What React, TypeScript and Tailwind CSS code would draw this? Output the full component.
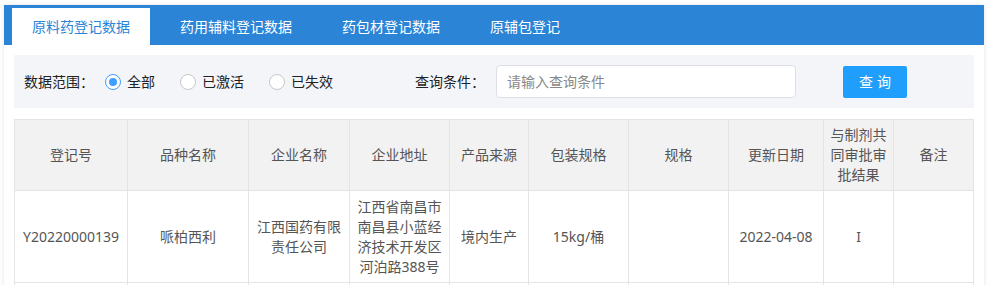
import React from 'react';

const font = '"Noto Sans", "Noto Sans CJK SC", sans-serif';

const tabs = ['原料药登记数据', '药用辅料登记数据', '药包材登记数据', '原辅包登记'];

const columns: { label: string; w: number }[] = [
  { label: '登记号', w: 113 },
  { label: '品种名称', w: 121 },
  { label: '企业名称', w: 101 },
  { label: '企业地址', w: 100 },
  { label: '产品来源', w: 79 },
  { label: '包装规格', w: 100 },
  { label: '规格', w: 100 },
  { label: '更新日期', w: 95 },
  { label: '与制剂共同审批审批结果', w: 70 },
  { label: '备注', w: 80 },
];

const row = [
  'Y20220000139',
  '哌柏西利',
  '江西国药有限责任公司',
  '江西省南昌市南昌县小蓝经济技术开发区河泊路388号',
  '境内生产',
  '15kg/桶',
  '',
  '2022-04-08',
  'I',
  '',
];

const Radio: React.FC<{ checked?: boolean; label: string }> = ({ checked, label }) => (
  <label className="flex items-center gap-[6px] cursor-pointer">
    <span
      className={
        checked
          ? 'w-4 h-4 rounded-full border border-[#409eff] bg-white flex items-center justify-center'
          : 'w-4 h-4 rounded-full border border-[#c8c8c8] bg-white'
      }
    >
      {checked && <span className="w-2 h-2 rounded-full bg-[#409eff]" />}
    </span>
    <span className="text-[14px] text-[#222]">{label}</span>
  </label>
);

export default function App() {
  return (
    <div className="bg-white w-[995px] h-[285px] overflow-hidden pt-[5px] px-1" style={{ fontFamily: font }}>
      <div className="w-[980px] bg-white shadow-[0_0_4px_rgba(0,0,0,0.12)]">
        <div className="h-10 bg-[#2b84d6] flex items-end pl-2 gap-[10px]">
          {tabs.map((t, i) => (
            <div
              key={t}
              className={
                i === 0
                  ? 'h-[37px] px-5 flex items-center bg-white text-[#2b84d6] text-[14px]'
                  : 'h-[37px] px-5 flex items-center text-white text-[14px]'
              }
            >
              {t}
            </div>
          ))}
        </div>

        <div className="px-[10px] pt-[10px]">
          <div className="h-[53px] bg-[#f4f5f9] flex items-center pl-[10px] text-[14px] text-[#222]">
            <span className="w-[81px]">数据范围：</span>
            <div className="flex items-center gap-[25px]">
              <Radio checked label="全部" />
              <Radio label="已激活" />
              <Radio label="已失效" />
            </div>
            <span className="ml-[82px] w-[81px]">查询条件：</span>
            <input
              placeholder="请输入查询条件"
              className="w-[300px] h-[33px] border border-[#dcdfe6] rounded bg-white px-[10px] text-[14px] placeholder:text-[#888] outline-none"
            />
            <button className="ml-[47px] w-16 h-8 bg-[#1f9ffb] rounded-[2px] text-white text-[14px] tracking-[4px] pl-1">
              查询
            </button>
          </div>

          <table className="mt-[11px] border-collapse table-fixed w-[960px] text-[14px] text-[#555] leading-5">
            <colgroup>
              {columns.map((c) => (
                <col key={c.label} style={{ width: c.w }} />
              ))}
            </colgroup>
            <thead>
              <tr className="h-[71px] bg-[#f2f2f2]">
                {columns.map((c) => (
                  <th key={c.label} className="border border-[#e4e4e4] px-1 font-normal text-center align-middle">
                    {c.label}
                  </th>
                ))}
              </tr>
            </thead>
            <tbody>
              <tr className="h-[92px]">
                {row.map((v, i) => (
                  <td key={i} className="border border-[#e4e4e4] px-[6px] text-center align-middle">
                    {v}
                  </td>
                ))}
              </tr>
              <tr className="h-10">
                {row.map((_, i) => (
                  <td key={i} className="border border-[#e4e4e4]" />
                ))}
              </tr>
            </tbody>
          </table>
        </div>
      </div>
    </div>
  );
}
